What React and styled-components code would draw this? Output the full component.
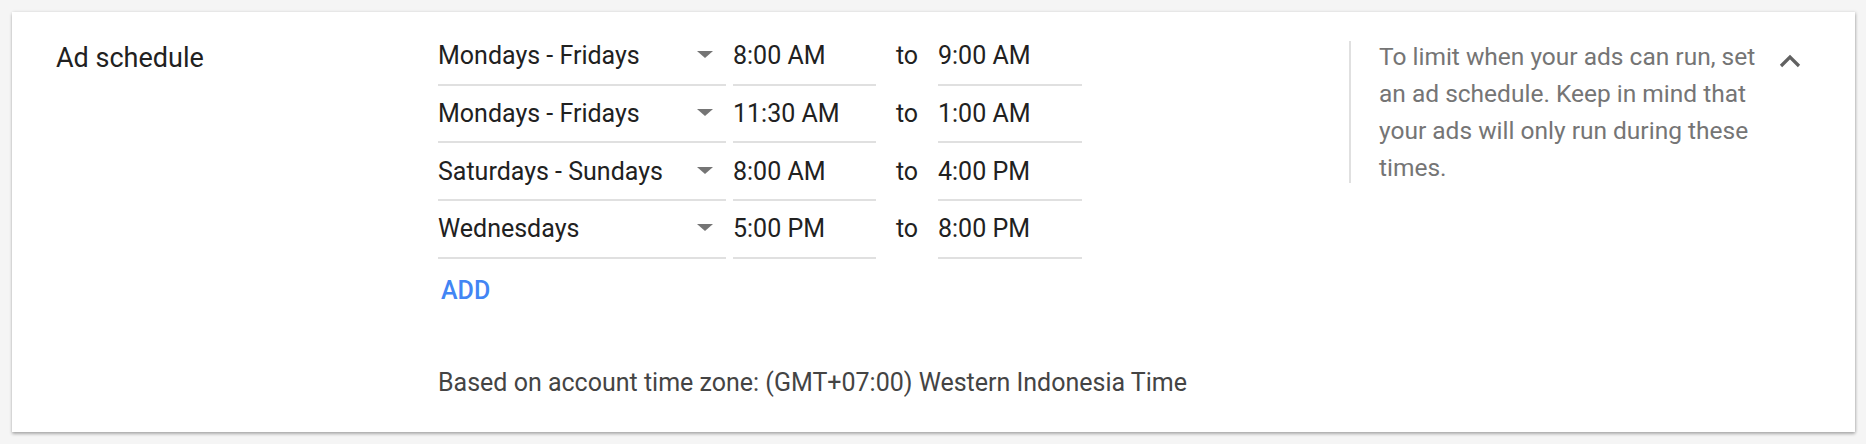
import styled, { createGlobalStyle } from "styled-components";

const GlobalStyle = createGlobalStyle`
  html, body {
    margin: 0;
    padding: 0;
    background: #f5f5f5;
  }
  body {
    font-family: Roboto, "Liberation Sans", Arial, sans-serif;
  }
`;

const schedule = [
  { days: "Mondays - Fridays", from: "8:00 AM", to: "9:00 AM" },
  { days: "Mondays - Fridays", from: "11:30 AM", to: "1:00 AM" },
  { days: "Saturdays - Sundays", from: "8:00 AM", to: "4:00 PM" },
  { days: "Wednesdays", from: "5:00 PM", to: "8:00 PM" },
];

const App = () => {
  return (
    <Page>
      <GlobalStyle />
      <Card>
        <Label>Ad schedule</Label>
        <Controls>
          <Rows>
            {schedule.map((row, i) => (
              <Row key={i}>
                <Select>
                  <span>{row.days}</span>
                  <Arrow />
                </Select>
                <Field>{row.from}</Field>
                <To>to</To>
                <Field>{row.to}</Field>
              </Row>
            ))}
          </Rows>
          <AddButton>ADD</AddButton>
          <ZoneNote>
            Based on account time zone: (GMT+07:00) Western Indonesia Time
          </ZoneNote>
        </Controls>
        <Side>
          <Help>
            To limit when your ads can run, set an ad schedule. Keep in mind
            that your ads will only run during these times.
          </Help>
          <Collapse aria-label="Collapse">
            <svg width="22" height="14" viewBox="0 0 22 14">
              <path
                d="M2 12 L11 3 L20 12"
                fill="none"
                stroke="#616161"
                strokeWidth="3.2"
              />
            </svg>
          </Collapse>
        </Side>
      </Card>
    </Page>
  );
};

const Page = styled.div`
  padding: 12px 11px 12px 12px;
`;

const Card = styled.div`
  display: flex;
  align-items: flex-start;
  background: #fff;
  height: 420px;
  box-sizing: border-box;
  padding: 16px 0 0 44px;
  box-shadow: 0 2px 3px rgba(0, 0, 0, 0.28), 1px 0 3px rgba(0, 0, 0, 0.12);
`;

const Label = styled.div`
  width: 382px;
  flex-shrink: 0;
  font-size: 27px;
  line-height: 60px;
  color: #212121;
`;

const Controls = styled.div`
  display: flex;
  flex-direction: column;
  align-items: flex-start;
`;

const Rows = styled.div`
  display: flex;
  flex-direction: column;
`;

const Row = styled.div`
  display: grid;
  grid-template-columns: 295px 143px 62px 144px;
  align-items: stretch;
  font-size: 25px;
  color: #212121;
`;

const Field = styled.div`
  height: 55.7px;
  display: flex;
  align-items: center;
  border-bottom: 2px solid #e0e0e0;
  white-space: nowrap;
`;

const Select = styled(Field)`
  justify-content: space-between;
  margin-right: 7px;
  padding-right: 13px;
`;

const Arrow = styled.span`
  width: 0;
  height: 0;
  border-left: 8px solid transparent;
  border-right: 8px solid transparent;
  border-top: 7px solid #757575;
  margin-bottom: 2px;
`;

const To = styled.div`
  display: flex;
  align-items: center;
  justify-content: center;
  height: 55.7px;
`;

const AddButton = styled.button`
  margin: 14px 0 0 0;
  padding: 0 3px;
  border: 0;
  background: none;
  font-family: inherit;
  font-size: 25px;
  font-weight: 500;
  line-height: 36px;
  color: #4285f4;
  cursor: pointer;
`;

const ZoneNote = styled.div`
  margin-top: 56px;
  font-size: 25px;
  line-height: 36px;
  color: #444;
  white-space: nowrap;
`;

const Side = styled.div`
  margin-left: auto;
  margin-top: 10px;
  display: flex;
  align-items: flex-start;
  padding-right: 54px;
`;

const Help = styled.div`
  position: relative;
  width: 392px;
  padding-left: 30px;
  font-size: 24.5px;
  line-height: 37px;
  color: #757575;

  &::before {
    content: "";
    position: absolute;
    left: 0;
    top: 3px;
    bottom: 3px;
    width: 2px;
    background: #e0e0e0;
  }
`;

const Collapse = styled.button`
  margin: 16px 0 0 8px;
  padding: 0;
  border: 0;
  background: none;
  width: 22px;
  height: 14px;
  display: flex;
  cursor: pointer;
`;

export default App;
